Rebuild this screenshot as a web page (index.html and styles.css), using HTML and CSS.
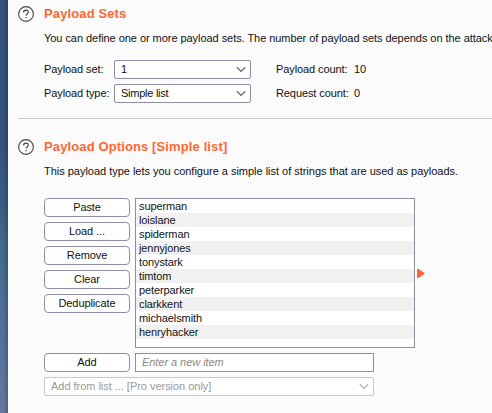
FILE: index.html
```html
<!DOCTYPE html>
<html lang="en">
<head>
<meta charset="utf-8">
<title>Payloads</title>
<link rel="stylesheet" href="styles.css">
</head>
<body>
<main class="panel">
  <section class="section sets">
    <svg class="help" viewBox="0 0 16 16"><circle cx="8" cy="8" r="7.4"/><path d="M5.6 6.4C5.6 4.9 6.6 4.1 8 4.1S10.4 4.9 10.4 6.1C10.4 7.7 8.1 7.8 8.1 9.7M8.1 10.9V12.2"/></svg>
    <div class="content">
      <h2>Payload Sets</h2>
      <p class="desc">You can define one or more payload sets. The number of payload sets depends on the attack</p>
      <div class="fields">
        <span class="label">Payload set:</span>
        <div class="select"><span>1</span><svg class="chevron" viewBox="0 0 10 7"><path d="M.8 1.2L5 5.4L9.2 1.2"/></svg></div>
        <span class="label count">Payload count:</span><span class="label">10</span>
        <span class="label">Payload type:</span>
        <div class="select"><span>Simple list</span><svg class="chevron" viewBox="0 0 10 7"><path d="M.8 1.2L5 5.4L9.2 1.2"/></svg></div>
        <span class="label count">Request count:</span><span class="label">0</span>
      </div>
    </div>
  </section>
  <hr>
  <section class="section options">
    <svg class="help" viewBox="0 0 16 16"><circle cx="8" cy="8" r="7.4"/><path d="M5.6 6.4C5.6 4.9 6.6 4.1 8 4.1S10.4 4.9 10.4 6.1C10.4 7.7 8.1 7.8 8.1 9.7M8.1 10.9V12.2"/></svg>
    <div class="content">
      <h2>Payload Options [Simple list]</h2>
      <p class="desc">This payload type lets you configure a simple list of strings that are used as payloads.</p>
      <div class="editor">
        <div class="buttons">
          <button>Paste</button>
          <button>Load ...</button>
          <button>Remove</button>
          <button>Clear</button>
          <button>Deduplicate</button>
        </div>
        <ul class="list">
          <li>superman</li>
          <li>loislane</li>
          <li>spiderman</li>
          <li>jennyjones</li>
          <li>tonystark</li>
          <li>timtom</li>
          <li>peterparker</li>
          <li>clarkkent</li>
          <li>michaelsmith</li>
          <li>henryhacker</li>
        </ul>
        <svg class="marker" viewBox="0 0 8 9"><path d="M0 0H1.5L8 4.5L1.5 9H0Z"/></svg>
      </div>
      <div class="add-row">
        <button>Add</button>
        <div class="input">Enter a new item</div>
      </div>
      <div class="select disabled"><span>Add from list ... [Pro version only]</span><svg class="chevron" viewBox="0 0 10 7"><path d="M.8 1.2L5 5.4L9.2 1.2"/></svg></div>
    </div>
  </section>
</main>
</body>
</html>
```
FILE: styles.css
```css
* { box-sizing: border-box; }
body {
  margin: 0;
  height: 413px;
  padding-left: 8px;
  overflow: hidden;
  background: linear-gradient(90deg, rgba(0,0,0,0) 3px, rgba(0,0,0,.2) 8px) 0 0 / 8px 100% no-repeat,
    linear-gradient(#31527c, #32547f 35%, #3c5f85 52%, #426b8c 60%, #4e6f9a 75%, #66799f);
  font: 11px/14px "Liberation Sans", Arial, sans-serif;
  color: #111;
}
.panel { height: 413px; padding-left: 10px; background: #fbfbfb; overflow: hidden; }
.section { display: flex; gap: 10px; }
.sets { padding-top: 5px; height: 118px; }
.options { padding-top: 19px; }
.help { width: 16px; height: 16px; margin-top: 1px; flex: none; fill: none; stroke: #444; stroke-width: 1.1; overflow: visible; }
.content { flex: 1; min-width: 0; }
h2 { margin: 0; font-size: 13px; line-height: 17px; letter-spacing: .12px; color: #ff6633; white-space: nowrap; }
.desc { margin: 9px 0 0; white-space: nowrap; letter-spacing: -.02px; }
.sets .desc { letter-spacing: -.05px; }
.fields {
  display: grid;
  grid-template-columns: 70px 137px 103px auto;
  grid-auto-rows: 19px;
  row-gap: 5px;
  align-items: center;
  justify-content: start;
  margin-top: 15px;
}
.label { padding-bottom: 2px; letter-spacing: -.1px; }
.count { padding-left: 25px; }
.select {
  display: flex;
  align-items: center;
  justify-content: space-between;
  height: 19px;
  padding: 0 4px 0 6px;
  border: 1px solid #8f8ca3;
  border-radius: 2px;
  background: #fff;
  letter-spacing: -.25px;
}
.select span { padding-bottom: 1px; }
.chevron { width: 10px; height: 7px; fill: none; stroke: #555; stroke-width: 1.1; }
hr { height: 1px; margin: 0; border: 0; background: #ccc; }
.editor { display: flex; margin-top: 20px; }
.buttons { display: flex; flex-direction: column; gap: 5px; margin-right: 5px; }
button {
  width: 86px;
  height: 19px;
  padding: 0;
  border: 1px solid #8f8ca3;
  border-radius: 4px;
  background: #fff;
  font: inherit;
  line-height: 17px;
  letter-spacing: -.1px;
  color: inherit;
}
.list { width: 280px; height: 150px; margin: 0; padding: 0; border: 1px solid #8f8ca3; background: #fff; list-style: none; }
.list li { height: 14px; padding-left: 3px; line-height: 14px; letter-spacing: -.1px; }
.list li:nth-child(even) { background: #f1f1f1; }
.marker { width: 8px; height: 9px; margin: 71px 0 0 2px; fill: #ff6633; }
.add-row { display: flex; gap: 5px; margin: 5px 0; }
.input { width: 239px; height: 19px; padding-left: 6px; border: 1px solid #8f8ca3; background: #fff; line-height: 17px; letter-spacing: -.05px; font-style: italic; color: #888; }
.disabled { width: 330px; border-color: #c8c8c8; color: #999; letter-spacing: -.03px; }
.disabled .chevron { stroke: #aaa; }
```
